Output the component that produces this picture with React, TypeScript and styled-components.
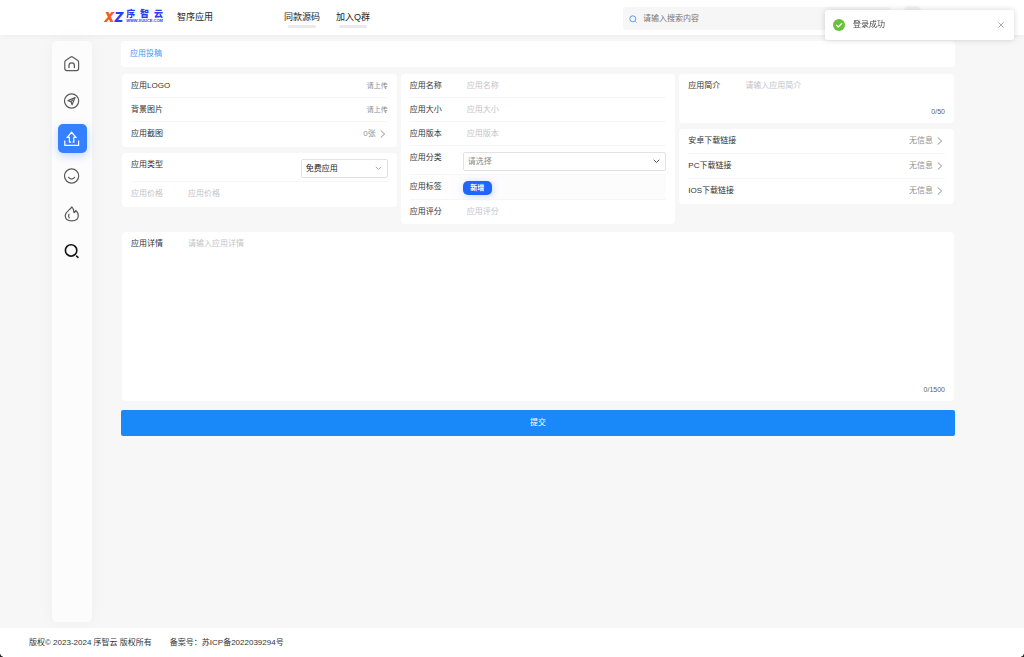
import React from 'react';
import styled, { createGlobalStyle, css } from 'styled-components';

const GlobalStyle = createGlobalStyle`
  *, *::before, *::after { box-sizing: border-box; }
  body {
    margin: 0;
    background: #f7f7f7;
    color: #333;
    font: 8px/12px "Liberation Sans", "Noto Sans CJK SC", sans-serif;
  }
  button, input, select, textarea {
    margin: 0;
    padding: 0;
    border: 0;
    background: none;
    color: inherit;
    font: inherit;
    outline: none;
  }
  button { cursor: pointer; }
  a { color: inherit; text-decoration: none; }
  ::placeholder { color: #c3c4c8; opacity: 1; }
`;

const Page = styled.div`
  display: flex;
  flex-direction: column;
  min-height: 100vh;
`;

const Header = styled.header`
  display: flex;
  align-items: center;
  height: 35px;
  padding: 0 103px 2px 104px;
  background: #fff;
  box-shadow: 0 1px 6px rgba(60, 60, 140, 0.06);
`;

const Logo = styled.a`
  display: flex;
  align-items: center;
  gap: 3px;
  width: 73px;
`;

const LogoMark = styled.span`
  display: flex;
  color: #2b3df0;
  font-family: Inter, sans-serif;
  font-size: 13px;
  font-style: italic;
  font-weight: 900;
  line-height: 14px;
`;

const LogoMarkAccent = styled.span`
  color: #fb5a1e;
`;

const LogoWords = styled.span`
  display: flex;
  flex-direction: column;
  color: #2f3cf5;
  font-weight: 700;
`;

const LogoName = styled.span`
  display: flex;
  justify-content: space-between;
  font-size: 9px;
  font-weight: 900;
  line-height: 9px;
`;

const LogoSite = styled.span`
  font-size: 4px;
  line-height: 4px;
`;

const Nav = styled.nav`
  display: flex;
  flex: 1;
  gap: 16px;
  color: #222;
  font-size: 9px;
  line-height: 14px;
`;

const NavHome = styled.a`
  width: 91px;
`;

const NavLink = styled.a`
  display: flex;
  flex-direction: column;
  align-items: center;
  height: 14px;

  &::after {
    content: '';
    flex: none;
    width: 28px;
    height: 3px;
    margin-top: 1px;
    border-radius: 2px;
    background: #e9e9eb;
  }
`;

const Search = styled.label`
  display: flex;
  align-items: center;
  gap: 6px;
  width: 268px;
  height: 23px;
  margin: 4px 13px 0 0;
  padding: 0 6px;
  border-radius: 4px;
  background: #f6f6f6;
  color: #4f8ff7;
`;

const SearchInput = styled.input`
  flex: 1;
  min-width: 0;
  color: #555;

  &::placeholder { color: #777; }
`;

const Avatar = styled.button`
  width: 17px;
  height: 22px;
  border-radius: 5px;
  background: #f3f3ef;
`;

const Body = styled.div`
  display: flex;
  flex: 1;
  gap: 29px;
  padding: 6px 69px 6px 52px;
`;

const Sidebar = styled.aside`
  flex: none;
  width: 40px;
  padding: 8px 0;
  border-radius: 5px;
  background: #fcfcfc;
  box-shadow: 0 0 20px rgba(0, 0, 0, 0.035);
`;

const SideNav = styled.nav`
  display: flex;
  flex-direction: column;
  align-items: center;
  justify-content: space-between;
  height: 217px;
`;

const SideLink = styled.a<{ $active?: boolean; $strong?: boolean }>`
  display: grid;
  place-items: center;
  width: 29px;
  height: 29px;
  border-radius: 5px;
  color: ${(p) => (p.$strong ? '#111' : '#5a5a5a')};
  ${(p) =>
    p.$active &&
    css`
      background: #3480ff;
      color: #fff;
      box-shadow: 0 3px 8px rgba(52, 128, 255, 0.3);
    `}
`;

const Form = styled.form`
  flex: 1;
  min-width: 0;
`;

const TitleBar = styled.h1`
  margin: 0 0 7px;
  padding: 7px 9px;
  border-radius: 4px;
  background: #fff;
  color: #3f92f7;
  font-size: 8px;
  font-weight: 400;
  line-height: 12px;
`;

const Columns = styled.div`
  display: grid;
  grid-template-columns: repeat(3, 1fr);
  gap: 4px;
  align-items: start;
  margin: 0 1px 8px;
`;

const Column = styled.div`
  display: grid;
  gap: 6px;
  min-width: 0;
`;

const Card = styled.section`
  padding: 0 9px;
  border-radius: 4px;
  background: #fff;
`;

const Row = styled.div<{ $size?: 'normal' | 'medium' | 'tall'; $tinted?: boolean }>`
  display: flex;
  justify-content: space-between;
  height: ${(p) => ({ normal: 24, medium: 25, tall: 29 })[p.$size ?? 'normal']}px;
  padding-top: 6px;
  background: ${(p) => (p.$tinted ? 'linear-gradient(90deg, #fff 10%, #fcfcfd 20%)' : 'none')};

  &:not(:last-child) { border-bottom: 1px solid #f6f6f6; }
`;

const Label = styled.label<{ $muted?: boolean }>`
  flex: none;
  width: 53px;
  color: ${(p) => (p.$muted ? '#c3c4c8' : '#333')};
`;

const TextInput = styled.input`
  flex: 1;
  min-width: 0;
  height: 12px;
  padding: 0 4px;
`;

const UploadButton = styled.button`
  height: 12px;
  color: #888;
  font-size: 7px;
`;

const MoreButton = styled.button`
  display: flex;
  align-items: center;
  gap: 4px;
  height: 12px;
  padding-right: 2px;
  color: #909090;
`;

const SelectBox = styled.div<{ $fill?: boolean }>`
  display: grid;
  align-items: center;
  width: ${(p) => (p.$fill ? 'auto' : '87px')};
  flex: ${(p) => (p.$fill ? '1' : 'none')};
  height: 19px;
  border: 1px solid #e2e2e4;
  border-radius: 2px;
  color: ${(p) => (p.$fill ? '#555' : '#aaa')};

  > * { grid-area: 1 / 1; }
  > svg { justify-self: end; margin-right: 5px; pointer-events: none; }
`;

const Select = styled.select<{ $empty?: boolean }>`
  width: 100%;
  height: 17px;
  padding: 0 16px 0 4px;
  appearance: none;
  color: ${(p) => (p.$empty ? '#8c8c8c' : '#222')};
`;

const AddTagButton = styled.button`
  width: 29px;
  height: 14px;
  margin-right: auto;
  border-radius: 5px;
  background: #1f66ff;
  box-shadow: 1px 1px 6px rgba(31, 102, 255, 0.25);
  color: #fff;
  font-size: 7px;
  font-weight: 700;
`;

const TextCard = styled(Card)<{ $large?: boolean }>`
  display: flex;
  flex-direction: column;
  height: ${(p) => (p.$large ? '169px' : '49px')};
  margin: ${(p) => (p.$large ? '0 1px 9px' : '0')};
  padding-top: 6px;
  padding-bottom: 5px;
`;

const TextLine = styled.div`
  display: flex;
  flex: 1;
`;

const TextArea = styled.textarea`
  flex: 1;
  min-width: 0;
  padding: 0 4px;
  resize: none;
`;

const Counter = styled.output`
  align-self: flex-end;
  color: #606266;
  font-size: 7px;
`;

const SubmitButton = styled.button`
  display: block;
  width: 100%;
  height: 26px;
  border-radius: 2px;
  background: #1989fa;
  color: #fff;
`;

const Footer = styled.footer`
  display: flex;
  gap: 18px;
  padding: 9px 29px 8px;
  background: #fff;
  color: #333;
`;

const Toast = styled.div`
  position: fixed;
  top: 10px;
  right: 10px;
  display: flex;
  align-items: center;
  gap: 8px;
  width: 189px;
  height: 30px;
  padding: 0 9px 0 8px;
  border-radius: 3px;
  background: #fff;
  box-shadow: 0 0 6px rgba(0, 0, 0, 0.16);
`;

const ToastText = styled.span`
  flex: 1;
  color: #444;
`;

const ToastClose = styled.button`
  display: grid;
  place-items: center;
  width: 8px;
  height: 8px;
  color: #999;
`;

const WindowCorner = styled.span<{ $side: 'left' | 'right' }>`
  position: fixed;
  bottom: 0;
  ${(p) => p.$side}: 0;
  width: 3px;
  height: 3px;
  background: radial-gradient(circle at ${(p) => (p.$side === 'left' ? 'right' : 'left')} top, transparent 2px, #222 3px);
`;

const Chevron = ({ down = false }: { down?: boolean }) => (
  <svg width={down ? 7 : 6} height={down ? 5 : 8} viewBox={down ? '0 0 7 5' : '0 0 6 8'} fill="none" stroke="currentColor" strokeLinecap="round" strokeLinejoin="round">
    <path d={down ? 'M1 1l2.5 2.5L6 1' : 'M1 .7L4.6 4 1 7.3'} />
  </svg>
);

const SearchIcon = () => (
  <svg width="8" height="8" viewBox="0 0 8 8" fill="none" stroke="currentColor" strokeWidth="0.9">
    <circle cx="3.8" cy="3.8" r="3" />
    <path d="M6.4 6.4l1.2 1.2" />
  </svg>
);

const glyph = {
  width: 16,
  height: 16,
  viewBox: '0 0 16 16',
  fill: 'none',
  stroke: 'currentColor',
  strokeWidth: 1.2,
  strokeLinejoin: 'round' as const,
  strokeLinecap: 'round' as const,
};

const sideItems = [
  {
    label: '首页',
    icon: (
      <svg {...glyph}>
        <path d="M.8 6.3Q.8 5 1.9 4.3L6.8 1Q7.7.4 8.6 1L13.5 4.3Q14.6 5 14.6 6.3V12.6Q14.6 14.6 12.6 14.6H2.8Q.8 14.6.8 12.6Z" />
        <path d="M5 11.6V9.6a2.7 2.7 0 0 1 5.4 0v2" strokeWidth="1.3" />
      </svg>
    ),
  },
  {
    label: '发现',
    icon: (
      <svg {...glyph}>
        <circle cx="7.6" cy="8" r="7.1" />
        <path d="M11 4.6L4 7.6l3 1.1 1.1 3z" />
        <path d="M7 8.7l1.7-1.7" />
      </svg>
    ),
  },
  {
    label: '投稿',
    active: true,
    icon: (
      <svg {...glyph} strokeLinejoin="miter" strokeLinecap="butt">
        <path d="M7.2 11.2H5.4V6.4H3.3L7.6 1.3l4.3 5.1H9.8v4.8H8.6" />
        <path d="M.8 9.4v5h13.8v-5" />
      </svg>
    ),
  },
  {
    label: '我的',
    icon: (
      <svg {...glyph}>
        <circle cx="7.6" cy="8" r="7.1" />
        <path d="M4.5 9.3a3.6 3.6 0 0 0 6.2 0" />
      </svg>
    ),
  },
  {
    label: '热门',
    icon: (
      <svg {...glyph}>
        <path d="M7.9.9C9.4 2.2 9.9 4 9.9 6.6c1.2-.2 1.5-.9 1.6-2 1.8 1.2 2.8 3 2.8 5 0 3.2-2.6 5.3-6.6 5.3S1.2 12.7 1.2 9.6C1.2 5.6 5.6 4.6 7.9.9z" />
        <path d="M5 8.2q-1.1 1.8.2 3.6" />
      </svg>
    ),
  },
  {
    label: '搜索',
    strong: true,
    icon: (
      <svg {...glyph} strokeWidth="1.6">
        <circle cx="7.1" cy="7.4" r="5.7" />
        <path d="M12.6 13.2l1.4 1.1" />
      </svg>
    ),
  },
];

const specs = [
  { id: 'name', label: '应用名称' },
  { id: 'size', label: '应用大小' },
  { id: 'version', label: '应用版本' },
];

const downloads = ['安卓下载链接', 'PC下载链接', 'IOS下载链接'];

export default function App() {
  return (
    <Page>
      <GlobalStyle />
      <Header>
        <Logo href="#">
          <LogoMark>
            <LogoMarkAccent>X</LogoMarkAccent>Z
          </LogoMark>
          <LogoWords>
            <LogoName>
              <span>序</span>
              <span>智</span>
              <span>云</span>
            </LogoName>
            <LogoSite>WWW.XUUCE.COM</LogoSite>
          </LogoWords>
        </Logo>
        <Nav>
          <NavHome href="#">智序应用</NavHome>
          <NavLink href="#">同款源码</NavLink>
          <NavLink href="#">加入Q群</NavLink>
        </Nav>
        <Search>
          <SearchIcon />
          <SearchInput type="text" placeholder="请输入搜索内容" aria-label="搜索" />
        </Search>
        <Avatar type="button" aria-label="账户" />
      </Header>

      <Body>
        <Sidebar>
          <SideNav>
            {sideItems.map((item) => (
              <SideLink key={item.label} href="#" aria-label={item.label} $active={item.active} $strong={item.strong}>
                {item.icon}
              </SideLink>
            ))}
          </SideNav>
        </Sidebar>

        <Form onSubmit={(e) => e.preventDefault()}>
          <TitleBar>应用投稿</TitleBar>
          <Columns>
            <Column>
              <Card>
                <Row>
                  <Label htmlFor="logo">应用LOGO</Label>
                  <UploadButton id="logo" type="button">请上传</UploadButton>
                </Row>
                <Row>
                  <Label htmlFor="background">背景图片</Label>
                  <UploadButton id="background" type="button">请上传</UploadButton>
                </Row>
                <Row $size="medium">
                  <Label htmlFor="shots">应用截图</Label>
                  <MoreButton id="shots" type="button">0张 <Chevron /></MoreButton>
                </Row>
              </Card>
              <Card>
                <Row $size="tall">
                  <Label htmlFor="type">应用类型</Label>
                  <SelectBox>
                    <Select id="type">
                      <option>免费应用</option>
                    </Select>
                    <Chevron down />
                  </SelectBox>
                </Row>
                <Row $size="medium">
                  <Label htmlFor="price" $muted>应用价格</Label>
                  <TextInput id="price" type="text" placeholder="应用价格" />
                </Row>
              </Card>
            </Column>

            <Card>
              {specs.map((s) => (
                <Row key={s.id}>
                  <Label htmlFor={s.id}>{s.label}</Label>
                  <TextInput id={s.id} type="text" placeholder={s.label} />
                </Row>
              ))}
              <Row $size="tall">
                <Label htmlFor="category">应用分类</Label>
                <SelectBox $fill>
                  <Select id="category" $empty>
                    <option>请选择</option>
                  </Select>
                  <Chevron down />
                </SelectBox>
              </Row>
              <Row $size="medium" $tinted>
                <Label htmlFor="tags">应用标签</Label>
                <AddTagButton id="tags" type="button">新增</AddTagButton>
              </Row>
              <Row>
                <Label htmlFor="score">应用评分</Label>
                <TextInput id="score" type="text" placeholder="应用评分" />
              </Row>
            </Card>

            <Column>
              <TextCard>
                <TextLine>
                  <Label htmlFor="intro">应用简介</Label>
                  <TextArea id="intro" placeholder="请输入应用简介" />
                </TextLine>
                <Counter htmlFor="intro">0/50</Counter>
              </TextCard>
              <Card>
                {downloads.map((name, i) => (
                  <Row key={name} $size="medium">
                    <Label htmlFor={`link-${i}`}>{name}</Label>
                    <MoreButton id={`link-${i}`} type="button">无信息 <Chevron /></MoreButton>
                  </Row>
                ))}
              </Card>
            </Column>
          </Columns>

          <TextCard $large>
            <TextLine>
              <Label htmlFor="detail">应用详情</Label>
              <TextArea id="detail" placeholder="请输入应用详情" />
            </TextLine>
            <Counter htmlFor="detail">0/1500</Counter>
          </TextCard>
          <SubmitButton type="submit">提交</SubmitButton>
        </Form>
      </Body>

      <Footer>
        <span>版权© 2023-2024 序智云 版权所有</span>
        <span>备案号：苏ICP备2022039294号</span>
      </Footer>

      <Toast role="status">
        <svg width="12" height="12" viewBox="0 0 12 12">
          <circle cx="6" cy="6" r="6" fill="#67c23a" />
          <path d="M3.4 6.2l1.8 1.8 3.5-3.5" fill="none" stroke="#fff" strokeWidth="1.2" strokeLinecap="round" strokeLinejoin="round" />
        </svg>
        <ToastText>登录成功</ToastText>
        <ToastClose type="button" aria-label="关闭">
          <svg width="6" height="6" viewBox="0 0 6 6" fill="none" stroke="currentColor" strokeWidth="0.8">
            <path d="M.3.3l5.4 5.4M5.7.3L.3 5.7" />
          </svg>
        </ToastClose>
      </Toast>

      <WindowCorner $side="left" />
      <WindowCorner $side="right" />
    </Page>
  );
}
